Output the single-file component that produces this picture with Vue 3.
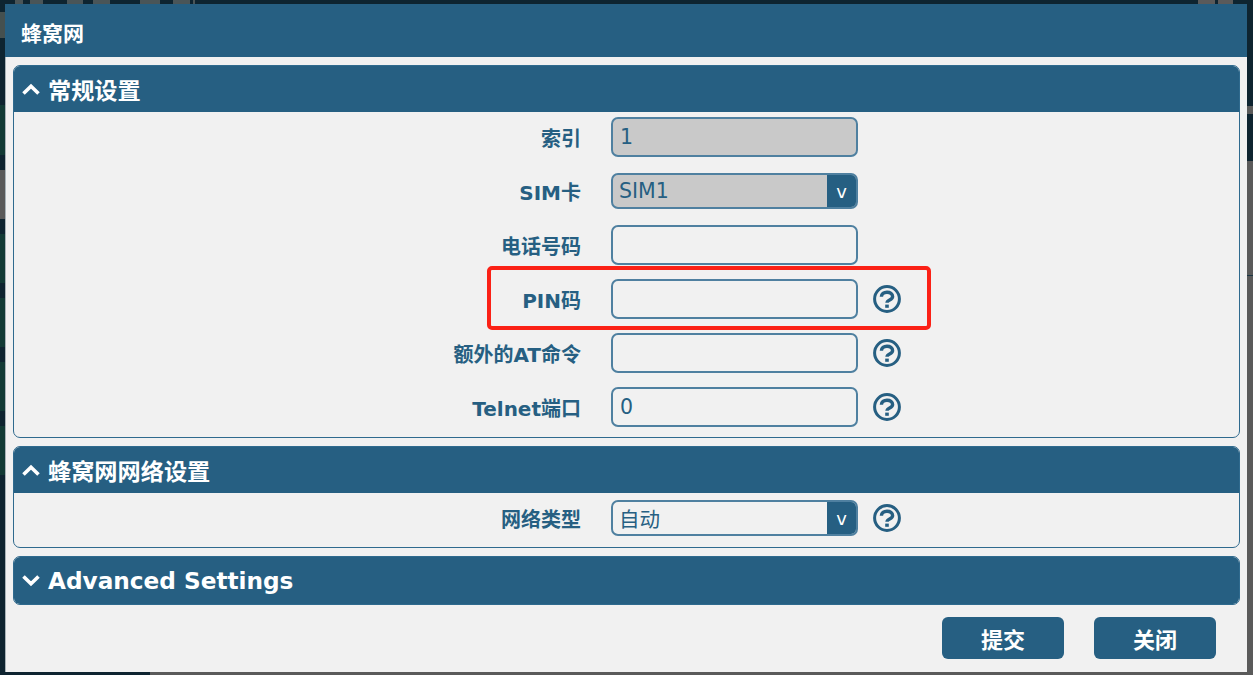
<script setup>
const general = [
  { label: '索引', kind: 'input', value: '1', disabled: true },
  { label: 'SIM卡', kind: 'select', value: 'SIM1', disabled: true },
  { label: '电话号码', kind: 'input', value: '' },
  { label: 'PIN码', kind: 'input', value: '', help: true, highlight: true },
  { label: '额外的AT命令', kind: 'input', value: '', help: true },
  { label: 'Telnet端口', kind: 'input', value: '0', help: true }
]
const network = [{ label: '网络类型', kind: 'select', value: '自动', help: true }]
const sections = [
  { title: '常规设置', open: true, rows: general },
  { title: '蜂窝网网络设置', open: true, rows: network },
  { title: 'Advanced Settings', open: false, rows: [] }
]
</script>

<template>
  <div class="page">
    <div class="modal">
      <header class="modal-head">蜂窝网</header>
      <div class="modal-body">
        <section v-for="s in sections" :key="s.title" class="panel" :class="{ closed: !s.open }">
          <h2 class="panel-head">
            <svg class="chev" viewBox="0 0 18 12" width="18" height="12">
              <path v-if="s.open" d="M1.5 10.5 9 3.2l7.5 7.3" />
              <path v-else d="M1.5 1.5 9 8.8l7.5-7.3" />
            </svg>
            <span>{{ s.title }}</span>
          </h2>
          <div v-if="s.open" class="panel-body">
            <div v-for="r in s.rows" :key="r.label" class="row" :class="{ highlighted: r.highlight }">
              <label class="label">{{ r.label }}</label>
              <div class="control" :class="{ disabled: r.disabled, select: r.kind === 'select' }">
                <span class="value">{{ r.value }}</span>
                <span v-if="r.kind === 'select'" class="arrow">v</span>
              </div>
              <svg v-if="r.help" class="help" viewBox="0 0 28 28" width="28" height="28">
                <circle cx="14" cy="14" r="12.4" />
                <path d="M8.4 11.8C8.4 8.8 10.8 7.2 14 7.2s5.6 1.6 5.6 4.2c0 3.8-5.6 3.2-5.6 6.4" />
                <rect x="12.2" y="19.6" width="3.6" height="3.2" />
              </svg>
              <div v-if="r.highlight" class="red-box"></div>
            </div>
          </div>
        </section>
        <div class="actions">
          <button class="btn">提交</button>
          <button class="btn">关闭</button>
        </div>
      </div>
    </div>
  </div>
</template>

<style>
html, body { margin: 0; background: #0e2430; }
</style>

<style scoped>
.page {
  width: 1253px;
  height: 675px;
  box-sizing: border-box;
  padding: 4px 6px 3px 5px;
  background-color: #0e2430;
  background-repeat: no-repeat;
  background-position: 0 0, 0 0, 100% 0, 1250px 0, 0 100%;
  background-size: 100% 4px, 5px 100%, 6px 100%, 2px 22px, 100% 3px;
  background-image:
    linear-gradient(to right,
      transparent 15px, #4a5558 15px 23px, transparent 23px 30px,
      #4a5558 30px 43px, transparent 43px 67px,
      #4a5558 67px 83px, transparent 83px 93px,
      #4a5558 93px 110px, transparent 110px 140px,
      #4a5558 140px 160px, transparent 160px 173px,
      #4a5558 173px 190px, transparent 190px 193px,
      #4a5558 193px 195px, transparent 195px 1198px,
      #5a5a5a 1198px 1215px, transparent 1215px 1218px,
      #5a5a5a 1218px 1233px, transparent 1233px),
    linear-gradient(to bottom,
      #0e2430 0 12px, #45504f 12px 38px, #0e2430 38px 105px,
      #123a35 105px 155px, #0e2430 155px 170px,
      #5a5a5a 170px 219px, #0e2430 219px 234px,
      #123a35 234px 283px, #0e2430 283px 298px,
      #123a35 298px 347px, #0e2430 347px 362px,
      #123a35 362px 411px, #0e2430 411px 426px,
      #123a35 426px 475px, #0e2430 475px),
    linear-gradient(to bottom,
      #0e2430 0 106px, #5a5a5a 106px 114px, #0e2430 114px 161px,
      #5a5a5a 161px 275px, #1c3644 275px 276px, #5a5a5a 276px),
    linear-gradient(#5a5a5a, #5a5a5a),
    linear-gradient(to right, #0e2430 0 150px, #5a5a5a 150px);
  overflow: hidden;
  font-family: "DejaVu Sans", "Noto Sans CJK SC", sans-serif;
  color: #265f82;
}
.modal {
  height: 100%;
  background: #f1f1f1;
  display: flex;
  flex-direction: column;
  box-shadow: inset 1px 0 #a9b3b8;
}
.modal-head {
  height: 53px;
  box-sizing: border-box;
  background: #265f82;
  color: #fff;
  font-weight: 700;
  font-size: 21px;
  display: flex;
  align-items: center;
  padding: 3px 0 0 16px;
  font-family: "Noto Sans CJK SC", sans-serif;
}
.modal-body {
  padding: 8px 7px 0 8px;
  display: flex;
  flex-direction: column;
  gap: 8px;
}
.panel {
  border: 1px solid #2f6a8e;
  border-radius: 7px;
  overflow: hidden;
}
.panel-head {
  margin: 0;
  height: 46px;
  background: #265f82;
  color: #fff;
  font-size: 23.2px;
  font-weight: 700;
  display: flex;
  align-items: center;
  gap: 8px;
  padding-left: 8px;
}
.closed .panel-head { height: 47px; }
.chev { fill: none; stroke: #fff; stroke-width: 3.6; }
.panel-body {
  padding: 5px 0 9px;
  display: flex;
  flex-direction: column;
  gap: 14px;
}
.panel:first-child .panel-body { padding-bottom: 10px; }
.row {
  height: 40px;
  display: flex;
  align-items: center;
  position: relative;
}
.label {
  width: 567px;
  text-align: right;
  font-size: 20px;
  font-weight: 700;
  margin-right: 30px;
}
.control {
  width: 247px;
  height: 40px;
  box-sizing: border-box;
  border: 2px solid #4f80a0;
  border-radius: 7px;
  display: flex;
  align-items: center;
  padding-left: 7px;
  font-size: 20.5px;
  overflow: hidden;
}
.disabled { background: #c9c9c9; }
.select { height: 36px; padding-right: 0; padding-left: 6px; }
.value { flex: 1; }
.arrow {
  width: 29px;
  align-self: stretch;
  background: #265f82;
  color: #fff;
  font-size: 18px;
  display: flex;
  align-items: center;
  justify-content: center;
}
.help {
  margin-left: 15px;
  fill: none;
  stroke: #265f82;
  stroke-width: 3;
}
.help path { stroke-width: 3.4; }
.help rect { fill: #265f82; stroke: none; }
.red-box {
  position: absolute;
  left: 473px;
  top: -13px;
  width: 444px;
  height: 64px;
  box-sizing: border-box;
  border: 4px solid #fb2116;
  border-radius: 5px;
}
.actions {
  display: flex;
  justify-content: flex-end;
  gap: 30px;
  padding-right: 24px;
  margin-top: 4px;
}
.btn {
  width: 122px;
  height: 42px;
  background: #265f82;
  color: #fff;
  border: 0;
  border-radius: 6px;
  font-size: 22px;
  font-weight: 700;
  font-family: "Noto Sans CJK SC", sans-serif;
}
</style>
